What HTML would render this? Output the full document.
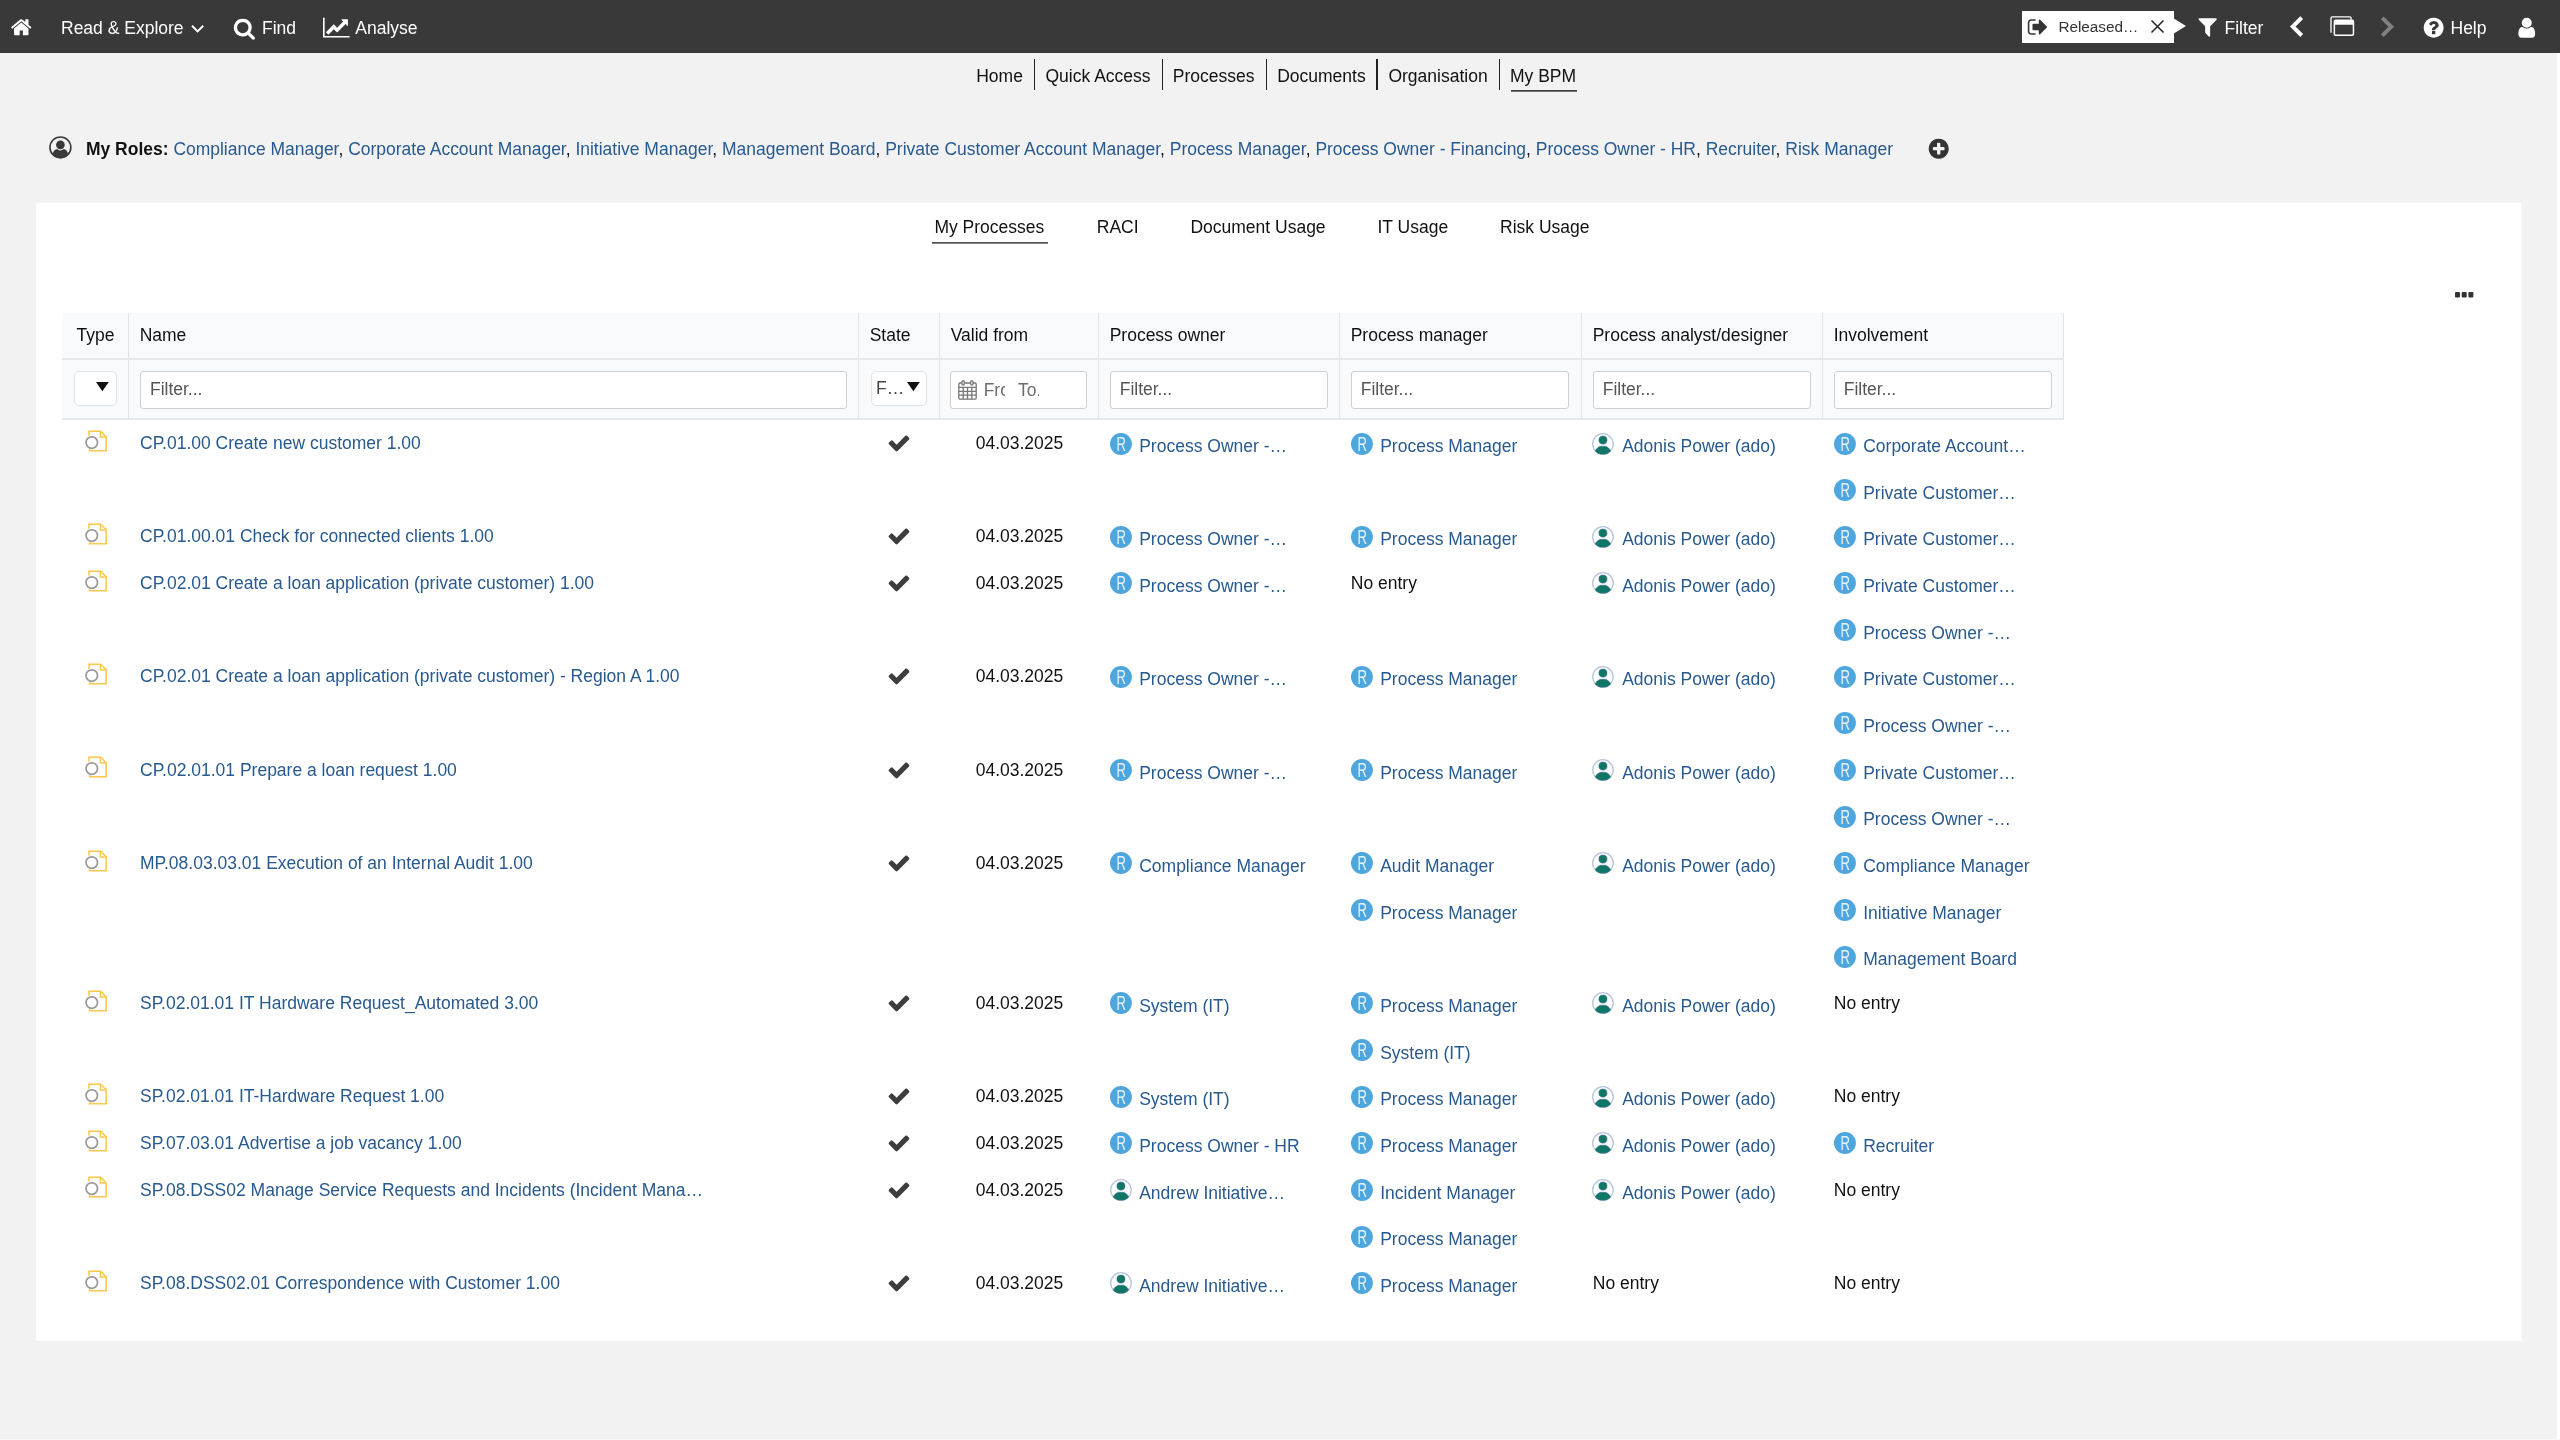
<!DOCTYPE html>
<html lang="en">
<head>
<meta charset="utf-8">
<title>My BPM</title>
<style>
*{box-sizing:border-box;margin:0;padding:0}
html,body{width:2560px;height:1440px;overflow:hidden}
body{background:#f2f2f2;font-family:"Liberation Sans",Arial,sans-serif;font-size:17.5px;color:#111;position:relative}
svg{display:block;overflow:visible}
#wrap{position:absolute;left:0;top:0;width:2560px;height:1440px;will-change:transform;overflow:hidden}
.abs{position:absolute}
/* ---------- top bar ---------- */
#topbar{position:absolute;left:0;top:0;width:2560px;height:53px;background:#393939;color:#fff}
#topbar .t{position:absolute;top:0;height:53px;line-height:56px;white-space:nowrap;font-size:17.5px;color:#fff}
#topbar svg{position:absolute;fill:#fff}
#relbox{position:absolute;left:2022px;top:10.700px;width:151.500px;height:32px;background:#fff}
#relbox .t{color:#333;font-size:15.3px;line-height:32px;height:32px;top:0}
#relarrow{position:absolute;left:2173.4px;top:17.6px;width:0;height:0;border-top:8px solid transparent;border-bottom:8px solid transparent;border-left:13px solid #fff}
/* ---------- nav ---------- */
#nav{position:absolute;left:0;top:58.7px;width:2560px;height:31.6px}
#nav span{position:absolute;top:0;height:31.6px;line-height:34px;white-space:nowrap;color:#111}
#nav i{position:absolute;top:0;width:1.4px;height:31.6px;background:#222}
#nav b{position:absolute;height:2px;background:linear-gradient(#434343 50%,#6f6f6f 50%)}
/* ---------- roles ---------- */
#roles{position:absolute;left:86px;top:137px;font-size:17.487px;height:24px;line-height:24px;white-space:nowrap;color:#111}
#roles a{color:#28598f;text-decoration:none}
#roles strong{font-weight:bold;color:#111}
/* ---------- panel ---------- */
#panel{position:absolute;left:36px;top:203px;width:2485px;height:1138px;background:#fff;box-shadow:0 -1px 0 #f8f8f8,1px 0 0 #f8f8f8}
#subtabs span{position:absolute;top:213px;height:28px;line-height:29px;white-space:nowrap;color:#111}
#subtabs b{position:absolute;height:2px;background:linear-gradient(#555 50%,#818181 50%)}
/* ---------- table ---------- */
#grid{position:absolute;left:62px;top:313px;border-collapse:separate;border-spacing:0;table-layout:fixed;width:2002px}
#grid th{background:#f8fafb;font-weight:normal;text-align:left;border-right:1px solid #e2e5e8;border-bottom:2px solid #e6e9eb;padding:0 0 0 10.67px;white-space:nowrap;overflow:hidden}
#grid tr.h th{height:47px;line-height:45px;color:#111}
#grid tr.f th{height:60px;position:relative}
#grid td{vertical-align:top;padding:0;white-space:nowrap;overflow:hidden}
#grid td.n{padding-left:11px;line-height:46.67px}
#grid td.n a, .e a{color:#28598f;text-decoration:none}
#grid td.d{text-align:center;line-height:46.67px;color:#111}
.e{position:relative;height:46.67px;line-height:46.67px;padding-left:40.2px}
.e a,.e em{position:relative;top:3px;font-style:normal}
.e svg.pi{left:10.2px}
#grid td:nth-child(5) .e svg.pi{left:11px}
.e svg{position:absolute;left:11px;top:12.5px;width:21.9px;height:21.9px}
#grid td.t,#grid td.c{position:relative}
.ti{position:absolute;left:22.7px;top:9.8px;width:22.6px;height:22.6px}
.ck{position:absolute;left:27.8px;top:11px;width:24px;height:24px;fill:#3d3d3d}
.ne{height:46.67px;line-height:46.67px;padding-left:10.8px;color:#111}
.fi{position:absolute;left:10.67px;top:11.2px;height:37.6px;border:1.33px solid #ccd1d6;border-radius:3px;background:#fff;color:#555;line-height:35px;padding-left:8.7px;text-align:left;overflow:hidden}
.dd{position:absolute;left:10.67px;top:11.2px;height:35.2px;border:1.33px solid #e1e4e7;border-radius:5px;background:#fff;color:#444;line-height:32px;text-align:left;overflow:hidden}
</style>
</head>
<body>
<div id="wrap">
<div id="topbar">
<svg style="left:10.200px;top:15.800px;width:22.500px;height:22.500px" viewBox="0 0 1792 1792"><path d="M1472 992v480q0 26-19 45t-45 19h-384v-384h-256v384h-384q-26 0-45-19t-19-45v-480q0-1 .5-3t.5-3l575-474 575 474q1 2 1 6zm223-69l-62 74q-8 9-21 11h-3q-13 0-21-7l-692-577-692 577q-12 8-24 7-13-2-21-11l-62-74q-8-10-7-23.500t11-21.500l719-599q32-26 76-26t76 26l244 204v-195q0-14 9-23t23-9h192q14 0 23 9t9 23v408l219 182q10 8 11 21.500t-7 23.500z"/></svg>
<span class="t" style="left:61px">Read &amp; Explore</span>
<svg style="left:190px;top:23px;width:16px;height:11px;fill:none;stroke:#fff;stroke-width:2" viewBox="0 0 16 11"><path d="M2 2.800l5.600 5.600 5.600-5.600"/></svg>
<svg style="left:232.900px;top:17.300px;width:22.800px;height:22.800px" viewBox="0 0 1792 1792"><path d="M1216 832q0-185-131.500-316.500t-316.500-131.500-316.500 131.500-131.500 316.500 131.500 316.500 316.500 131.500 316.500-131.500 131.500-316.500zm512 832q0 52-38 90t-90 38q-54 0-90-38l-343-342q-179 124-399 124-143 0-273.500-55.500t-225-150-150-225-55.500-273.500 55.500-273.500 150-225 225-150 273.500-55.500 273.500 55.500 225 150 150 225 55.500 273.500q0 220-124 399l343 343q37 37 37 90z"/></svg>
<span class="t" style="left:262px">Find</span>
<svg style="left:322.800px;top:16px;width:26.600px;height:23.300px" viewBox="0 0 2048 1792"><path d="M2048 1536v128h-2048v-1536h128v1408h1920zm-128-1248v435q0 21-19.500 29.500t-35.500-7.500l-121-121-633 633q-10 10-23 10t-23-10l-233-233-416 416-192-192 585-585q10-10 23-10t23 10l233 233 464-464-121-121q-16-16-7.500-35.500t29.500-19.500h435q14 0 23 9t9 23z"/></svg>
<span class="t" style="left:355.3px">Analyse</span>
<div id="relbox">
<svg style="left:4.600px;top:5.200px;width:22px;height:22px;fill:#333" viewBox="0 0 1792 1792"><path d="M704 1440q0 4 1 20t.5 26.500-3 23.500-10 19.500-20.500 6.500h-320q-119 0-203.500-84.500t-84.500-203.500v-704q0-119 84.500-203.500t203.500-84.500h320q13 0 22.500 9.500t9.500 22.500q0 4 1 20t.5 26.500-3 23.500-10 19.500-20.500 6.500h-320q-66 0-113 47t-47 113v704q0 66 47 113t113 47h312l11.500 1 11.500 3 8 5.500 7 9 2 13.500zm928-544q0 26-19 45l-544 544q-19 19-45 19t-45-19-19-45v-288h-448q-26 0-45-19t-19-45v-384q0-26 19-45t45-19h448v-288q0-26 19-45t45-19 45 19l544 544q19 19 19 45z"/></svg>
<span class="t" style="left:36.400px">Released…</span>
<svg style="left:129.100px;top:9.300px;width:13px;height:13px;fill:none;stroke:#222;stroke-width:1.5" viewBox="0 0 13 13"><path d="M0.5 0.5L12.5 12.5M12.5 0.5L0.5 12.5"/></svg>
</div>
<div id="relarrow"></div>
<svg style="left:2195.750px;top:14.800px;width:23.300px;height:23.300px" viewBox="0 0 1792 1792"><path d="M1595 295q17 41-14 70l-493 493v742q0 42-39 59-13 5-25 5-27 0-45-19l-256-256q-19-19-19-45v-486l-493-493q-31-29-14-70 17-39 59-39h1280q42 0 59 39z"/></svg>
<span class="t" style="left:2224.5px">Filter</span>
<svg style="left:2286px;top:14px;width:20px;height:26px;fill:none;stroke:#fff;stroke-width:4;stroke-linejoin:miter" viewBox="0 0 20 26"><path d="M15.700 3.700L6.800 12.600l8.900 8.900"/></svg>
<svg style="left:2330px;top:16px;width:25px;height:21px;fill:none;stroke:#fff;stroke-width:1.300" viewBox="0 0 25 21"><path d="M1 16.800V2.200A1.300 1.300 0 0 1 2.300 .9H19.800A1.300 1.300 0 0 1 21.100 2.200V3.500"/><rect x="4.350" y="4.250" width="19.100" height="14.900" rx="1.200" stroke-width="1.500"/><rect x="4.350" y="4.250" width="19.100" height="4.500" fill="#fff" stroke="none"/></svg>
<svg style="left:2378px;top:14px;width:20px;height:26px;fill:none;stroke:#808080;stroke-width:4;stroke-linejoin:miter" viewBox="0 0 20 26"><path d="M4.300 3.900l8.900 8.900-8.900 8.900"/></svg>
<svg style="left:2422.300px;top:15.500px;width:23.300px;height:23.300px" viewBox="0 0 1792 1792"><path d="M1024 1376v-192q0-14-9-23t-23-9h-192q-14 0-23 9t-9 23v192q0 14 9 23t23 9h192q14 0 23-9t9-23zm256-672q0-88-55.500-163t-138.500-116-170-41q-243 0-371 213-15 24 8 42l132 100q7 6 19 6 16 0 25-12 53-68 86-92 34-24 86-24 48 0 85.500 26t37.500 59q0 38-20 61t-68 45q-63 28-115.500 86.500t-52.500 125.500v36q0 14 9 23t23 9h192q14 0 23-9t9-23q0-19 21.500-49.500t54.500-49.500q32-18 49-28.500t46-35 44.500-48 28-60.500 12.500-81zm384 192q0 209-103 385.500t-279.500 279.500-385.500 103-385.500-103-279.500-279.500-103-385.500 103-385.500 279.500-279.500 385.500-103 385.500 103 279.500 279.500 103 385.500z"/></svg>
<span class="t" style="left:2450.500px">Help</span>
<svg style="left:2514.850px;top:15.800px;width:23.500px;height:23.500px" viewBox="0 0 1792 1792"><path d="M1536 1399q0 109-62.500 187t-150.500 78h-854q-88 0-150.500-78t-62.500-187q0-85 8.500-160.500t31.500-152 58.500-131 94-89 134.500-34.500q131 128 313 128t313-128q76 0 134.500 34.500t94 89 58.500 131 31.500 152 8.500 160.500zm-256-887q0 159-112.500 271.500t-271.500 112.500-271.500-112.500-112.500-271.500 112.500-271.500 271.500-112.500 271.500 112.500 112.500 271.500z"/></svg>
</div>
<div id="nav">
<span style="left:976.2px">Home</span><i style="left:1034.1px"></i>
<span style="left:1045.5px">Quick Access</span><i style="left:1161.8px"></i>
<span style="left:1172.8px">Processes</span><i style="left:1265.8px"></i>
<span style="left:1277.2px">Documents</span><i style="left:1376.4px"></i>
<span style="left:1388.4px">Organisation</span><i style="left:1499.1px"></i>
<span style="left:1510px">My BPM</span><b style="left:1511px;top:31.300px;width:65.600px"></b>
</div>
<svg class="abs" style="left:49.3px;top:136.2px;width:22.8px;height:22.8px" viewBox="0 0 24 24"><circle cx="12" cy="12" r="11" fill="none" stroke="#3a3a3a" stroke-width="1.7"/><circle cx="12" cy="9.300" r="4.600" fill="#3a3a3a"/><path fill="#3a3a3a" d="M3.800 19.600c.4-3.600 2.600-5.400 4.700-5.800 1 .9 2.200 1.400 3.500 1.400s2.500-.5 3.500-1.400c2.100.4 4.300 2.200 4.700 5.800A10.800 10.800 0 0 1 12 23a10.800 10.800 0 0 1-8.200-3.400z"/></svg>
<div id="roles"><strong>My Roles:</strong> <a>Compliance Manager</a>, <a>Corporate Account Manager</a>, <a>Initiative Manager</a>, <a>Management Board</a>, <a>Private Customer Account Manager</a>, <a>Process Manager</a>, <a>Process Owner - Financing</a>, <a>Process Owner - HR</a>, <a>Recruiter</a>, <a>Risk Manager</a></div>
<svg class="abs" style="left:1927px;top:137px;width:23.400px;height:23.400px;fill:#333" viewBox="0 0 1792 1792"><path d="M1344 960v-128q0-26-19-45t-45-19h-256v-256q0-26-19-45t-45-19h-128q-26 0-45 19t-19 45v256h-256q-26 0-45 19t-19 45v128q0 26 19 45t45 19h256v256q0 26 19 45t45 19h128q26 0 45-19t19-45v-256h256q26 0 45-19t19-45zm320-64q0 209-103 385.500t-279.500 279.500-385.500 103-385.500-103-279.500-279.500-103-385.500 103-385.500 279.500-279.500 385.500-103 385.500 103 279.500 279.500 103 385.500z"/></svg>
<div id="panel"></div>
<div class="abs" style="left:2557px;top:53px;width:3px;height:1387px;background:#fff"></div>
<div class="abs" style="left:0;top:1439px;width:2560px;height:1px;background:#f9f9f9"></div>
<div id="subtabs">
<span style="left:934.4px">My Processes</span><b style="left:932px;top:242px;width:115.500px"></b>
<span style="left:1096.8px">RACI</span>
<span style="left:1190.4px">Document Usage</span>
<span style="left:1377.5px">IT Usage</span>
<span style="left:1500px">Risk Usage</span>
<svg class="abs" style="left:2455px;top:291.600px;width:18.400px;height:5.600px" viewBox="0 0 18.400 5.600"><rect x="0" y="0" width="5" height="5.600" rx="1" fill="#333"/><rect x="6.700" y="0" width="5" height="5.600" rx="1" fill="#333"/><rect x="13.400" y="0" width="5" height="5.600" rx="1" fill="#333"/></svg>
</div>
<table id="grid">
<colgroup><col style="width:67px"><col style="width:730px"><col style="width:81px"><col style="width:159px"><col style="width:241px"><col style="width:242px"><col style="width:241px"><col style="width:241px"></colgroup>
<tr class="h"><th style="padding-left:14.600px">Type</th><th>Name</th><th>State</th><th>Valid from</th><th>Process owner</th><th>Process manager</th><th>Process analyst/designer</th><th>Involvement</th></tr>
<tr class="f">
<th><div class="dd" style="left:12px;width:42.500px"><svg class="abs" style="left:20.9px;top:10.1px;width:12.800px;height:9.300px" viewBox="0 0 12.800 9.300"><path d="M0 0h12.800L6.400 9.300z" fill="#111"/></svg></div></th>
<th><div class="fi" style="left:11.250px;width:706.250px">Filter...</div></th>
<th><div class="dd" style="left:12px;width:55.500px;padding-left:4px">F…<svg class="abs" style="left:34.6px;top:10.1px;width:12.800px;height:9.300px" viewBox="0 0 12.800 9.300"><path d="M0 0h12.800L6.400 9.300z" fill="#111"/></svg></div></th>
<th><div class="fi" style="left:10.250px;width:136.700px;padding:0"><svg class="abs" style="left:6.500px;top:7.700px;width:19px;height:20px" viewBox="0 0 19 20"><g fill="none" stroke="#777" stroke-width="1.300"><rect x=".8" y="3" width="17.400" height="16.200" rx="1.300"/><path d="M.8 7.400h17.400M.8 11.300h17.400M.8 15.200h17.400M5.200 7.400v11.800M9.500 7.400v11.800M13.800 7.400v11.800"/><rect x="4" y=".7" width="2.300" height="4.300" rx="1.100" fill="#fff"/><rect x="12.700" y=".7" width="2.300" height="4.300" rx="1.100" fill="#fff"/></g></svg><span class="abs" style="left:32.400px;top:.9px;width:21px;overflow:hidden;color:#6d6d6d">From</span><span class="abs" style="left:66.700px;top:.9px;width:21.300px;overflow:hidden;color:#6d6d6d">To...</span></div></th>
<th><div class="fi" style="left:11px;width:218px">Filter...</div></th>
<th><div class="fi" style="left:11px;width:218px">Filter...</div></th>
<th><div class="fi" style="left:11px;width:218px">Filter...</div></th>
<th><div class="fi" style="left:11px;width:218px">Filter...</div></th>
</tr>
<tr><td class="t"><svg class="ti" viewBox="0 0 22 22"><path d="M3.900 5.500V1.200h11.300l5.400 5.400v13.600H4.500v-1.500" fill="none" stroke="#fbc64a" stroke-width="1.500"/><path d="M14.900 1.600v5.200h5.200" fill="none" stroke="#fbc74b" stroke-width="1.300"/><circle cx="6.600" cy="12.200" r="5.600" fill="#fff" stroke="#9a9a9a" stroke-width="1.700"/></svg></td><td class="n"><a>CP.01.00 Create new customer 1.00</a></td><td class="c"><svg class="ck" viewBox="0 0 1792 1792"><path d="M1671 566q0 40-28 68l-724 724-136 136q-28 28-68 28t-68-28l-136-136-362-362q-28-28-28-68t28-68l136-136q28-28 68-28t68 28l294 295 656-657q28-28 68-28t68 28l136 136q28 28 28 68z"/></svg></td><td class="d">04.03.2025</td><td><div class="e"><svg viewBox="0 0 22 22"><circle cx="11" cy="11" r="11" fill="#4ea6de"/><text x="11" y="17.7" text-anchor="middle" font-family="Liberation Sans,Arial,sans-serif" font-size="19.4" fill="#fff" fill-opacity=".86" transform="translate(11.2 0) scale(.68 1) translate(-11 0)">R</text></svg><a>Process Owner -…</a></div></td><td><div class="e"><svg viewBox="0 0 22 22"><circle cx="11" cy="11" r="11" fill="#4ea6de"/><text x="11" y="17.7" text-anchor="middle" font-family="Liberation Sans,Arial,sans-serif" font-size="19.4" fill="#fff" fill-opacity=".86" transform="translate(11.2 0) scale(.68 1) translate(-11 0)">R</text></svg><a>Process Manager</a></div></td><td><div class="e"><svg class="pi" viewBox="0 0 22 22"><circle cx="11" cy="11" r="10.3" fill="#fff" stroke="#b7c6da" stroke-width="1.3"/><circle cx="11" cy="7.1" r="4.1" fill="#0f7865" stroke="#45659c" stroke-width=".5"/><path d="M8.400 13.300h5.200c2.300.8 4.200 2.500 5.200 4.700A9.700 9.700 0 0 1 11 21.400 9.700 9.700 0 0 1 3.200 18c1-2.200 2.900-3.900 5.200-4.700z" fill="#0f7865" stroke="#45659c" stroke-width=".5"/></svg><a>Adonis Power (ado)</a></div></td><td><div class="e"><svg viewBox="0 0 22 22"><circle cx="11" cy="11" r="11" fill="#4ea6de"/><text x="11" y="17.7" text-anchor="middle" font-family="Liberation Sans,Arial,sans-serif" font-size="19.4" fill="#fff" fill-opacity=".86" transform="translate(11.2 0) scale(.68 1) translate(-11 0)">R</text></svg><a>Corporate Account…</a></div><div class="e"><svg viewBox="0 0 22 22"><circle cx="11" cy="11" r="11" fill="#4ea6de"/><text x="11" y="17.7" text-anchor="middle" font-family="Liberation Sans,Arial,sans-serif" font-size="19.4" fill="#fff" fill-opacity=".86" transform="translate(11.2 0) scale(.68 1) translate(-11 0)">R</text></svg><a>Private Customer…</a></div></td></tr>
<tr><td class="t"><svg class="ti" viewBox="0 0 22 22"><path d="M3.900 5.500V1.200h11.300l5.400 5.400v13.600H4.500v-1.500" fill="none" stroke="#fbc64a" stroke-width="1.500"/><path d="M14.900 1.600v5.200h5.200" fill="none" stroke="#fbc74b" stroke-width="1.300"/><circle cx="6.600" cy="12.200" r="5.600" fill="#fff" stroke="#9a9a9a" stroke-width="1.700"/></svg></td><td class="n"><a>CP.01.00.01 Check for connected clients 1.00</a></td><td class="c"><svg class="ck" viewBox="0 0 1792 1792"><path d="M1671 566q0 40-28 68l-724 724-136 136q-28 28-68 28t-68-28l-136-136-362-362q-28-28-28-68t28-68l136-136q28-28 68-28t68 28l294 295 656-657q28-28 68-28t68 28l136 136q28 28 28 68z"/></svg></td><td class="d">04.03.2025</td><td><div class="e"><svg viewBox="0 0 22 22"><circle cx="11" cy="11" r="11" fill="#4ea6de"/><text x="11" y="17.7" text-anchor="middle" font-family="Liberation Sans,Arial,sans-serif" font-size="19.4" fill="#fff" fill-opacity=".86" transform="translate(11.2 0) scale(.68 1) translate(-11 0)">R</text></svg><a>Process Owner -…</a></div></td><td><div class="e"><svg viewBox="0 0 22 22"><circle cx="11" cy="11" r="11" fill="#4ea6de"/><text x="11" y="17.7" text-anchor="middle" font-family="Liberation Sans,Arial,sans-serif" font-size="19.4" fill="#fff" fill-opacity=".86" transform="translate(11.2 0) scale(.68 1) translate(-11 0)">R</text></svg><a>Process Manager</a></div></td><td><div class="e"><svg class="pi" viewBox="0 0 22 22"><circle cx="11" cy="11" r="10.3" fill="#fff" stroke="#b7c6da" stroke-width="1.3"/><circle cx="11" cy="7.1" r="4.1" fill="#0f7865" stroke="#45659c" stroke-width=".5"/><path d="M8.400 13.300h5.200c2.300.8 4.200 2.500 5.200 4.700A9.700 9.700 0 0 1 11 21.400 9.700 9.700 0 0 1 3.200 18c1-2.200 2.900-3.900 5.200-4.700z" fill="#0f7865" stroke="#45659c" stroke-width=".5"/></svg><a>Adonis Power (ado)</a></div></td><td><div class="e"><svg viewBox="0 0 22 22"><circle cx="11" cy="11" r="11" fill="#4ea6de"/><text x="11" y="17.7" text-anchor="middle" font-family="Liberation Sans,Arial,sans-serif" font-size="19.4" fill="#fff" fill-opacity=".86" transform="translate(11.2 0) scale(.68 1) translate(-11 0)">R</text></svg><a>Private Customer…</a></div></td></tr>
<tr><td class="t"><svg class="ti" viewBox="0 0 22 22"><path d="M3.900 5.500V1.200h11.300l5.400 5.400v13.600H4.500v-1.500" fill="none" stroke="#fbc64a" stroke-width="1.500"/><path d="M14.900 1.600v5.200h5.200" fill="none" stroke="#fbc74b" stroke-width="1.300"/><circle cx="6.600" cy="12.200" r="5.600" fill="#fff" stroke="#9a9a9a" stroke-width="1.700"/></svg></td><td class="n"><a>CP.02.01 Create a loan application (private customer) 1.00</a></td><td class="c"><svg class="ck" viewBox="0 0 1792 1792"><path d="M1671 566q0 40-28 68l-724 724-136 136q-28 28-68 28t-68-28l-136-136-362-362q-28-28-28-68t28-68l136-136q28-28 68-28t68 28l294 295 656-657q28-28 68-28t68 28l136 136q28 28 28 68z"/></svg></td><td class="d">04.03.2025</td><td><div class="e"><svg viewBox="0 0 22 22"><circle cx="11" cy="11" r="11" fill="#4ea6de"/><text x="11" y="17.7" text-anchor="middle" font-family="Liberation Sans,Arial,sans-serif" font-size="19.4" fill="#fff" fill-opacity=".86" transform="translate(11.2 0) scale(.68 1) translate(-11 0)">R</text></svg><a>Process Owner -…</a></div></td><td><div class="ne">No entry</div></td><td><div class="e"><svg class="pi" viewBox="0 0 22 22"><circle cx="11" cy="11" r="10.3" fill="#fff" stroke="#b7c6da" stroke-width="1.3"/><circle cx="11" cy="7.1" r="4.1" fill="#0f7865" stroke="#45659c" stroke-width=".5"/><path d="M8.400 13.300h5.200c2.300.8 4.200 2.500 5.200 4.700A9.700 9.700 0 0 1 11 21.400 9.700 9.700 0 0 1 3.200 18c1-2.200 2.900-3.900 5.200-4.700z" fill="#0f7865" stroke="#45659c" stroke-width=".5"/></svg><a>Adonis Power (ado)</a></div></td><td><div class="e"><svg viewBox="0 0 22 22"><circle cx="11" cy="11" r="11" fill="#4ea6de"/><text x="11" y="17.7" text-anchor="middle" font-family="Liberation Sans,Arial,sans-serif" font-size="19.4" fill="#fff" fill-opacity=".86" transform="translate(11.2 0) scale(.68 1) translate(-11 0)">R</text></svg><a>Private Customer…</a></div><div class="e"><svg viewBox="0 0 22 22"><circle cx="11" cy="11" r="11" fill="#4ea6de"/><text x="11" y="17.7" text-anchor="middle" font-family="Liberation Sans,Arial,sans-serif" font-size="19.4" fill="#fff" fill-opacity=".86" transform="translate(11.2 0) scale(.68 1) translate(-11 0)">R</text></svg><a>Process Owner -…</a></div></td></tr>
<tr><td class="t"><svg class="ti" viewBox="0 0 22 22"><path d="M3.900 5.500V1.200h11.300l5.400 5.400v13.600H4.500v-1.500" fill="none" stroke="#fbc64a" stroke-width="1.500"/><path d="M14.900 1.600v5.200h5.200" fill="none" stroke="#fbc74b" stroke-width="1.300"/><circle cx="6.600" cy="12.200" r="5.600" fill="#fff" stroke="#9a9a9a" stroke-width="1.700"/></svg></td><td class="n"><a>CP.02.01 Create a loan application (private customer) - Region A 1.00</a></td><td class="c"><svg class="ck" viewBox="0 0 1792 1792"><path d="M1671 566q0 40-28 68l-724 724-136 136q-28 28-68 28t-68-28l-136-136-362-362q-28-28-28-68t28-68l136-136q28-28 68-28t68 28l294 295 656-657q28-28 68-28t68 28l136 136q28 28 28 68z"/></svg></td><td class="d">04.03.2025</td><td><div class="e"><svg viewBox="0 0 22 22"><circle cx="11" cy="11" r="11" fill="#4ea6de"/><text x="11" y="17.7" text-anchor="middle" font-family="Liberation Sans,Arial,sans-serif" font-size="19.4" fill="#fff" fill-opacity=".86" transform="translate(11.2 0) scale(.68 1) translate(-11 0)">R</text></svg><a>Process Owner -…</a></div></td><td><div class="e"><svg viewBox="0 0 22 22"><circle cx="11" cy="11" r="11" fill="#4ea6de"/><text x="11" y="17.7" text-anchor="middle" font-family="Liberation Sans,Arial,sans-serif" font-size="19.4" fill="#fff" fill-opacity=".86" transform="translate(11.2 0) scale(.68 1) translate(-11 0)">R</text></svg><a>Process Manager</a></div></td><td><div class="e"><svg class="pi" viewBox="0 0 22 22"><circle cx="11" cy="11" r="10.3" fill="#fff" stroke="#b7c6da" stroke-width="1.3"/><circle cx="11" cy="7.1" r="4.1" fill="#0f7865" stroke="#45659c" stroke-width=".5"/><path d="M8.400 13.300h5.200c2.300.8 4.200 2.500 5.200 4.700A9.700 9.700 0 0 1 11 21.400 9.700 9.700 0 0 1 3.200 18c1-2.200 2.900-3.900 5.200-4.700z" fill="#0f7865" stroke="#45659c" stroke-width=".5"/></svg><a>Adonis Power (ado)</a></div></td><td><div class="e"><svg viewBox="0 0 22 22"><circle cx="11" cy="11" r="11" fill="#4ea6de"/><text x="11" y="17.7" text-anchor="middle" font-family="Liberation Sans,Arial,sans-serif" font-size="19.4" fill="#fff" fill-opacity=".86" transform="translate(11.2 0) scale(.68 1) translate(-11 0)">R</text></svg><a>Private Customer…</a></div><div class="e"><svg viewBox="0 0 22 22"><circle cx="11" cy="11" r="11" fill="#4ea6de"/><text x="11" y="17.7" text-anchor="middle" font-family="Liberation Sans,Arial,sans-serif" font-size="19.4" fill="#fff" fill-opacity=".86" transform="translate(11.2 0) scale(.68 1) translate(-11 0)">R</text></svg><a>Process Owner -…</a></div></td></tr>
<tr><td class="t"><svg class="ti" viewBox="0 0 22 22"><path d="M3.900 5.500V1.200h11.300l5.400 5.400v13.600H4.500v-1.500" fill="none" stroke="#fbc64a" stroke-width="1.500"/><path d="M14.900 1.600v5.200h5.200" fill="none" stroke="#fbc74b" stroke-width="1.300"/><circle cx="6.600" cy="12.200" r="5.600" fill="#fff" stroke="#9a9a9a" stroke-width="1.700"/></svg></td><td class="n"><a>CP.02.01.01 Prepare a loan request 1.00</a></td><td class="c"><svg class="ck" viewBox="0 0 1792 1792"><path d="M1671 566q0 40-28 68l-724 724-136 136q-28 28-68 28t-68-28l-136-136-362-362q-28-28-28-68t28-68l136-136q28-28 68-28t68 28l294 295 656-657q28-28 68-28t68 28l136 136q28 28 28 68z"/></svg></td><td class="d">04.03.2025</td><td><div class="e"><svg viewBox="0 0 22 22"><circle cx="11" cy="11" r="11" fill="#4ea6de"/><text x="11" y="17.7" text-anchor="middle" font-family="Liberation Sans,Arial,sans-serif" font-size="19.4" fill="#fff" fill-opacity=".86" transform="translate(11.2 0) scale(.68 1) translate(-11 0)">R</text></svg><a>Process Owner -…</a></div></td><td><div class="e"><svg viewBox="0 0 22 22"><circle cx="11" cy="11" r="11" fill="#4ea6de"/><text x="11" y="17.7" text-anchor="middle" font-family="Liberation Sans,Arial,sans-serif" font-size="19.4" fill="#fff" fill-opacity=".86" transform="translate(11.2 0) scale(.68 1) translate(-11 0)">R</text></svg><a>Process Manager</a></div></td><td><div class="e"><svg class="pi" viewBox="0 0 22 22"><circle cx="11" cy="11" r="10.3" fill="#fff" stroke="#b7c6da" stroke-width="1.3"/><circle cx="11" cy="7.1" r="4.1" fill="#0f7865" stroke="#45659c" stroke-width=".5"/><path d="M8.400 13.300h5.200c2.300.8 4.200 2.500 5.200 4.700A9.700 9.700 0 0 1 11 21.400 9.700 9.700 0 0 1 3.200 18c1-2.200 2.900-3.900 5.200-4.700z" fill="#0f7865" stroke="#45659c" stroke-width=".5"/></svg><a>Adonis Power (ado)</a></div></td><td><div class="e"><svg viewBox="0 0 22 22"><circle cx="11" cy="11" r="11" fill="#4ea6de"/><text x="11" y="17.7" text-anchor="middle" font-family="Liberation Sans,Arial,sans-serif" font-size="19.4" fill="#fff" fill-opacity=".86" transform="translate(11.2 0) scale(.68 1) translate(-11 0)">R</text></svg><a>Private Customer…</a></div><div class="e"><svg viewBox="0 0 22 22"><circle cx="11" cy="11" r="11" fill="#4ea6de"/><text x="11" y="17.7" text-anchor="middle" font-family="Liberation Sans,Arial,sans-serif" font-size="19.4" fill="#fff" fill-opacity=".86" transform="translate(11.2 0) scale(.68 1) translate(-11 0)">R</text></svg><a>Process Owner -…</a></div></td></tr>
<tr><td class="t"><svg class="ti" viewBox="0 0 22 22"><path d="M3.900 5.500V1.200h11.300l5.400 5.400v13.600H4.500v-1.500" fill="none" stroke="#fbc64a" stroke-width="1.500"/><path d="M14.900 1.600v5.200h5.200" fill="none" stroke="#fbc74b" stroke-width="1.300"/><circle cx="6.600" cy="12.200" r="5.600" fill="#fff" stroke="#9a9a9a" stroke-width="1.700"/></svg></td><td class="n"><a>MP.08.03.03.01 Execution of an Internal Audit 1.00</a></td><td class="c"><svg class="ck" viewBox="0 0 1792 1792"><path d="M1671 566q0 40-28 68l-724 724-136 136q-28 28-68 28t-68-28l-136-136-362-362q-28-28-28-68t28-68l136-136q28-28 68-28t68 28l294 295 656-657q28-28 68-28t68 28l136 136q28 28 28 68z"/></svg></td><td class="d">04.03.2025</td><td><div class="e"><svg viewBox="0 0 22 22"><circle cx="11" cy="11" r="11" fill="#4ea6de"/><text x="11" y="17.7" text-anchor="middle" font-family="Liberation Sans,Arial,sans-serif" font-size="19.4" fill="#fff" fill-opacity=".86" transform="translate(11.2 0) scale(.68 1) translate(-11 0)">R</text></svg><a>Compliance Manager</a></div></td><td><div class="e"><svg viewBox="0 0 22 22"><circle cx="11" cy="11" r="11" fill="#4ea6de"/><text x="11" y="17.7" text-anchor="middle" font-family="Liberation Sans,Arial,sans-serif" font-size="19.4" fill="#fff" fill-opacity=".86" transform="translate(11.2 0) scale(.68 1) translate(-11 0)">R</text></svg><a>Audit Manager</a></div><div class="e"><svg viewBox="0 0 22 22"><circle cx="11" cy="11" r="11" fill="#4ea6de"/><text x="11" y="17.7" text-anchor="middle" font-family="Liberation Sans,Arial,sans-serif" font-size="19.4" fill="#fff" fill-opacity=".86" transform="translate(11.2 0) scale(.68 1) translate(-11 0)">R</text></svg><a>Process Manager</a></div></td><td><div class="e"><svg class="pi" viewBox="0 0 22 22"><circle cx="11" cy="11" r="10.3" fill="#fff" stroke="#b7c6da" stroke-width="1.3"/><circle cx="11" cy="7.1" r="4.1" fill="#0f7865" stroke="#45659c" stroke-width=".5"/><path d="M8.400 13.300h5.200c2.300.8 4.200 2.500 5.200 4.700A9.700 9.700 0 0 1 11 21.400 9.700 9.700 0 0 1 3.200 18c1-2.200 2.900-3.900 5.200-4.700z" fill="#0f7865" stroke="#45659c" stroke-width=".5"/></svg><a>Adonis Power (ado)</a></div></td><td><div class="e"><svg viewBox="0 0 22 22"><circle cx="11" cy="11" r="11" fill="#4ea6de"/><text x="11" y="17.7" text-anchor="middle" font-family="Liberation Sans,Arial,sans-serif" font-size="19.4" fill="#fff" fill-opacity=".86" transform="translate(11.2 0) scale(.68 1) translate(-11 0)">R</text></svg><a>Compliance Manager</a></div><div class="e"><svg viewBox="0 0 22 22"><circle cx="11" cy="11" r="11" fill="#4ea6de"/><text x="11" y="17.7" text-anchor="middle" font-family="Liberation Sans,Arial,sans-serif" font-size="19.4" fill="#fff" fill-opacity=".86" transform="translate(11.2 0) scale(.68 1) translate(-11 0)">R</text></svg><a>Initiative Manager</a></div><div class="e"><svg viewBox="0 0 22 22"><circle cx="11" cy="11" r="11" fill="#4ea6de"/><text x="11" y="17.7" text-anchor="middle" font-family="Liberation Sans,Arial,sans-serif" font-size="19.4" fill="#fff" fill-opacity=".86" transform="translate(11.2 0) scale(.68 1) translate(-11 0)">R</text></svg><a>Management Board</a></div></td></tr>
<tr><td class="t"><svg class="ti" viewBox="0 0 22 22"><path d="M3.900 5.500V1.200h11.300l5.400 5.400v13.600H4.500v-1.500" fill="none" stroke="#fbc64a" stroke-width="1.500"/><path d="M14.900 1.600v5.200h5.200" fill="none" stroke="#fbc74b" stroke-width="1.300"/><circle cx="6.600" cy="12.200" r="5.600" fill="#fff" stroke="#9a9a9a" stroke-width="1.700"/></svg></td><td class="n"><a>SP.02.01.01 IT Hardware Request_Automated 3.00</a></td><td class="c"><svg class="ck" viewBox="0 0 1792 1792"><path d="M1671 566q0 40-28 68l-724 724-136 136q-28 28-68 28t-68-28l-136-136-362-362q-28-28-28-68t28-68l136-136q28-28 68-28t68 28l294 295 656-657q28-28 68-28t68 28l136 136q28 28 28 68z"/></svg></td><td class="d">04.03.2025</td><td><div class="e"><svg viewBox="0 0 22 22"><circle cx="11" cy="11" r="11" fill="#4ea6de"/><text x="11" y="17.7" text-anchor="middle" font-family="Liberation Sans,Arial,sans-serif" font-size="19.4" fill="#fff" fill-opacity=".86" transform="translate(11.2 0) scale(.68 1) translate(-11 0)">R</text></svg><a>System (IT)</a></div></td><td><div class="e"><svg viewBox="0 0 22 22"><circle cx="11" cy="11" r="11" fill="#4ea6de"/><text x="11" y="17.7" text-anchor="middle" font-family="Liberation Sans,Arial,sans-serif" font-size="19.4" fill="#fff" fill-opacity=".86" transform="translate(11.2 0) scale(.68 1) translate(-11 0)">R</text></svg><a>Process Manager</a></div><div class="e"><svg viewBox="0 0 22 22"><circle cx="11" cy="11" r="11" fill="#4ea6de"/><text x="11" y="17.7" text-anchor="middle" font-family="Liberation Sans,Arial,sans-serif" font-size="19.4" fill="#fff" fill-opacity=".86" transform="translate(11.2 0) scale(.68 1) translate(-11 0)">R</text></svg><a>System (IT)</a></div></td><td><div class="e"><svg class="pi" viewBox="0 0 22 22"><circle cx="11" cy="11" r="10.3" fill="#fff" stroke="#b7c6da" stroke-width="1.3"/><circle cx="11" cy="7.1" r="4.1" fill="#0f7865" stroke="#45659c" stroke-width=".5"/><path d="M8.400 13.300h5.200c2.300.8 4.200 2.500 5.200 4.700A9.700 9.700 0 0 1 11 21.400 9.700 9.700 0 0 1 3.200 18c1-2.200 2.900-3.900 5.200-4.700z" fill="#0f7865" stroke="#45659c" stroke-width=".5"/></svg><a>Adonis Power (ado)</a></div></td><td><div class="ne">No entry</div></td></tr>
<tr><td class="t"><svg class="ti" viewBox="0 0 22 22"><path d="M3.900 5.500V1.200h11.300l5.400 5.400v13.600H4.500v-1.500" fill="none" stroke="#fbc64a" stroke-width="1.500"/><path d="M14.900 1.600v5.200h5.200" fill="none" stroke="#fbc74b" stroke-width="1.300"/><circle cx="6.600" cy="12.200" r="5.600" fill="#fff" stroke="#9a9a9a" stroke-width="1.700"/></svg></td><td class="n"><a>SP.02.01.01 IT-Hardware Request 1.00</a></td><td class="c"><svg class="ck" viewBox="0 0 1792 1792"><path d="M1671 566q0 40-28 68l-724 724-136 136q-28 28-68 28t-68-28l-136-136-362-362q-28-28-28-68t28-68l136-136q28-28 68-28t68 28l294 295 656-657q28-28 68-28t68 28l136 136q28 28 28 68z"/></svg></td><td class="d">04.03.2025</td><td><div class="e"><svg viewBox="0 0 22 22"><circle cx="11" cy="11" r="11" fill="#4ea6de"/><text x="11" y="17.7" text-anchor="middle" font-family="Liberation Sans,Arial,sans-serif" font-size="19.4" fill="#fff" fill-opacity=".86" transform="translate(11.2 0) scale(.68 1) translate(-11 0)">R</text></svg><a>System (IT)</a></div></td><td><div class="e"><svg viewBox="0 0 22 22"><circle cx="11" cy="11" r="11" fill="#4ea6de"/><text x="11" y="17.7" text-anchor="middle" font-family="Liberation Sans,Arial,sans-serif" font-size="19.4" fill="#fff" fill-opacity=".86" transform="translate(11.2 0) scale(.68 1) translate(-11 0)">R</text></svg><a>Process Manager</a></div></td><td><div class="e"><svg class="pi" viewBox="0 0 22 22"><circle cx="11" cy="11" r="10.3" fill="#fff" stroke="#b7c6da" stroke-width="1.3"/><circle cx="11" cy="7.1" r="4.1" fill="#0f7865" stroke="#45659c" stroke-width=".5"/><path d="M8.400 13.300h5.200c2.300.8 4.200 2.500 5.200 4.700A9.700 9.700 0 0 1 11 21.400 9.700 9.700 0 0 1 3.200 18c1-2.200 2.900-3.900 5.200-4.700z" fill="#0f7865" stroke="#45659c" stroke-width=".5"/></svg><a>Adonis Power (ado)</a></div></td><td><div class="ne">No entry</div></td></tr>
<tr><td class="t"><svg class="ti" viewBox="0 0 22 22"><path d="M3.900 5.500V1.200h11.300l5.400 5.400v13.600H4.500v-1.500" fill="none" stroke="#fbc64a" stroke-width="1.500"/><path d="M14.900 1.600v5.200h5.200" fill="none" stroke="#fbc74b" stroke-width="1.300"/><circle cx="6.600" cy="12.200" r="5.600" fill="#fff" stroke="#9a9a9a" stroke-width="1.700"/></svg></td><td class="n"><a>SP.07.03.01 Advertise a job vacancy 1.00</a></td><td class="c"><svg class="ck" viewBox="0 0 1792 1792"><path d="M1671 566q0 40-28 68l-724 724-136 136q-28 28-68 28t-68-28l-136-136-362-362q-28-28-28-68t28-68l136-136q28-28 68-28t68 28l294 295 656-657q28-28 68-28t68 28l136 136q28 28 28 68z"/></svg></td><td class="d">04.03.2025</td><td><div class="e"><svg viewBox="0 0 22 22"><circle cx="11" cy="11" r="11" fill="#4ea6de"/><text x="11" y="17.7" text-anchor="middle" font-family="Liberation Sans,Arial,sans-serif" font-size="19.4" fill="#fff" fill-opacity=".86" transform="translate(11.2 0) scale(.68 1) translate(-11 0)">R</text></svg><a>Process Owner - HR</a></div></td><td><div class="e"><svg viewBox="0 0 22 22"><circle cx="11" cy="11" r="11" fill="#4ea6de"/><text x="11" y="17.7" text-anchor="middle" font-family="Liberation Sans,Arial,sans-serif" font-size="19.4" fill="#fff" fill-opacity=".86" transform="translate(11.2 0) scale(.68 1) translate(-11 0)">R</text></svg><a>Process Manager</a></div></td><td><div class="e"><svg class="pi" viewBox="0 0 22 22"><circle cx="11" cy="11" r="10.3" fill="#fff" stroke="#b7c6da" stroke-width="1.3"/><circle cx="11" cy="7.1" r="4.1" fill="#0f7865" stroke="#45659c" stroke-width=".5"/><path d="M8.400 13.300h5.200c2.300.8 4.200 2.500 5.200 4.700A9.700 9.700 0 0 1 11 21.400 9.700 9.700 0 0 1 3.200 18c1-2.200 2.900-3.900 5.200-4.700z" fill="#0f7865" stroke="#45659c" stroke-width=".5"/></svg><a>Adonis Power (ado)</a></div></td><td><div class="e"><svg viewBox="0 0 22 22"><circle cx="11" cy="11" r="11" fill="#4ea6de"/><text x="11" y="17.7" text-anchor="middle" font-family="Liberation Sans,Arial,sans-serif" font-size="19.4" fill="#fff" fill-opacity=".86" transform="translate(11.2 0) scale(.68 1) translate(-11 0)">R</text></svg><a>Recruiter</a></div></td></tr>
<tr><td class="t"><svg class="ti" viewBox="0 0 22 22"><path d="M3.900 5.500V1.200h11.300l5.400 5.400v13.600H4.500v-1.500" fill="none" stroke="#fbc64a" stroke-width="1.500"/><path d="M14.900 1.600v5.200h5.200" fill="none" stroke="#fbc74b" stroke-width="1.300"/><circle cx="6.600" cy="12.200" r="5.600" fill="#fff" stroke="#9a9a9a" stroke-width="1.700"/></svg></td><td class="n"><a>SP.08.DSS02 Manage Service Requests and Incidents (Incident Mana…</a></td><td class="c"><svg class="ck" viewBox="0 0 1792 1792"><path d="M1671 566q0 40-28 68l-724 724-136 136q-28 28-68 28t-68-28l-136-136-362-362q-28-28-28-68t28-68l136-136q28-28 68-28t68 28l294 295 656-657q28-28 68-28t68 28l136 136q28 28 28 68z"/></svg></td><td class="d">04.03.2025</td><td><div class="e"><svg class="pi" viewBox="0 0 22 22"><circle cx="11" cy="11" r="10.3" fill="#fff" stroke="#b7c6da" stroke-width="1.3"/><circle cx="11" cy="7.1" r="4.1" fill="#0f7865" stroke="#45659c" stroke-width=".5"/><path d="M8.400 13.300h5.200c2.300.8 4.200 2.500 5.200 4.700A9.700 9.700 0 0 1 11 21.400 9.700 9.700 0 0 1 3.200 18c1-2.200 2.900-3.900 5.200-4.700z" fill="#0f7865" stroke="#45659c" stroke-width=".5"/></svg><a>Andrew Initiative…</a></div></td><td><div class="e"><svg viewBox="0 0 22 22"><circle cx="11" cy="11" r="11" fill="#4ea6de"/><text x="11" y="17.7" text-anchor="middle" font-family="Liberation Sans,Arial,sans-serif" font-size="19.4" fill="#fff" fill-opacity=".86" transform="translate(11.2 0) scale(.68 1) translate(-11 0)">R</text></svg><a>Incident Manager</a></div><div class="e"><svg viewBox="0 0 22 22"><circle cx="11" cy="11" r="11" fill="#4ea6de"/><text x="11" y="17.7" text-anchor="middle" font-family="Liberation Sans,Arial,sans-serif" font-size="19.4" fill="#fff" fill-opacity=".86" transform="translate(11.2 0) scale(.68 1) translate(-11 0)">R</text></svg><a>Process Manager</a></div></td><td><div class="e"><svg class="pi" viewBox="0 0 22 22"><circle cx="11" cy="11" r="10.3" fill="#fff" stroke="#b7c6da" stroke-width="1.3"/><circle cx="11" cy="7.1" r="4.1" fill="#0f7865" stroke="#45659c" stroke-width=".5"/><path d="M8.400 13.300h5.200c2.300.8 4.200 2.500 5.200 4.700A9.700 9.700 0 0 1 11 21.400 9.700 9.700 0 0 1 3.200 18c1-2.200 2.900-3.900 5.200-4.700z" fill="#0f7865" stroke="#45659c" stroke-width=".5"/></svg><a>Adonis Power (ado)</a></div></td><td><div class="ne">No entry</div></td></tr>
<tr><td class="t"><svg class="ti" viewBox="0 0 22 22"><path d="M3.900 5.500V1.200h11.300l5.400 5.400v13.600H4.500v-1.500" fill="none" stroke="#fbc64a" stroke-width="1.500"/><path d="M14.900 1.600v5.200h5.200" fill="none" stroke="#fbc74b" stroke-width="1.300"/><circle cx="6.600" cy="12.200" r="5.600" fill="#fff" stroke="#9a9a9a" stroke-width="1.700"/></svg></td><td class="n"><a>SP.08.DSS02.01 Correspondence with Customer 1.00</a></td><td class="c"><svg class="ck" viewBox="0 0 1792 1792"><path d="M1671 566q0 40-28 68l-724 724-136 136q-28 28-68 28t-68-28l-136-136-362-362q-28-28-28-68t28-68l136-136q28-28 68-28t68 28l294 295 656-657q28-28 68-28t68 28l136 136q28 28 28 68z"/></svg></td><td class="d">04.03.2025</td><td><div class="e"><svg class="pi" viewBox="0 0 22 22"><circle cx="11" cy="11" r="10.3" fill="#fff" stroke="#b7c6da" stroke-width="1.3"/><circle cx="11" cy="7.1" r="4.1" fill="#0f7865" stroke="#45659c" stroke-width=".5"/><path d="M8.400 13.300h5.200c2.300.8 4.200 2.500 5.200 4.700A9.700 9.700 0 0 1 11 21.400 9.700 9.700 0 0 1 3.200 18c1-2.200 2.900-3.900 5.200-4.700z" fill="#0f7865" stroke="#45659c" stroke-width=".5"/></svg><a>Andrew Initiative…</a></div></td><td><div class="e"><svg viewBox="0 0 22 22"><circle cx="11" cy="11" r="11" fill="#4ea6de"/><text x="11" y="17.7" text-anchor="middle" font-family="Liberation Sans,Arial,sans-serif" font-size="19.4" fill="#fff" fill-opacity=".86" transform="translate(11.2 0) scale(.68 1) translate(-11 0)">R</text></svg><a>Process Manager</a></div></td><td><div class="ne">No entry</div></td><td><div class="ne">No entry</div></td></tr>
</table>
</div>
</body>
</html>
